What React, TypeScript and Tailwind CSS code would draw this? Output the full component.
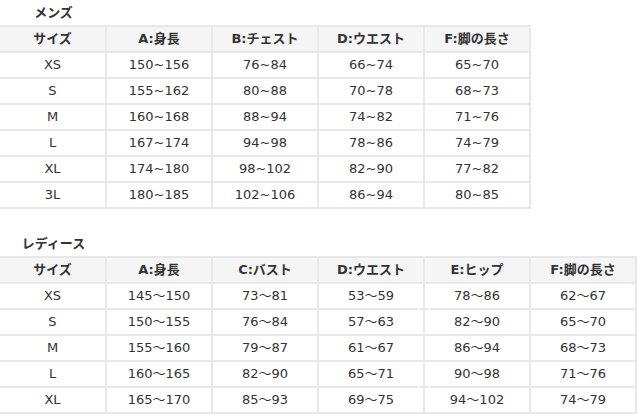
const mens = {
  title: 'メンズ',
  headers: ['サイズ', 'A:身長', 'B:チェスト', 'D:ウエスト', 'F:脚の長さ'],
  rows: [
    ['XS', '150~156', '76~84', '66~74', '65~70'],
    ['S', '155~162', '80~88', '70~78', '68~73'],
    ['M', '160~168', '88~94', '74~82', '71~76'],
    ['L', '167~174', '94~98', '78~86', '74~79'],
    ['XL', '174~180', '98~102', '82~90', '77~82'],
    ['3L', '180~185', '102~106', '86~94', '80~85'],
  ],
};

const ladies = {
  title: 'レディース',
  headers: ['サイズ', 'A:身長', 'C:バスト', 'D:ウエスト', 'E:ヒップ', 'F:脚の長さ'],
  rows: [
    ['XS', '145～150', '73～81', '53～59', '78～86', '62～67'],
    ['S', '150～155', '76～84', '57～63', '82～90', '65～70'],
    ['M', '155～160', '79～87', '61～67', '86～94', '68～73'],
    ['L', '160～165', '82～90', '65～71', '90～98', '71～76'],
    ['XL', '165～170', '85～93', '69～75', '94～102', '74～79'],
  ],
};

function SizeTable({
  title,
  headers,
  rows,
  cols,
}: {
  title: string;
  headers: string[];
  rows: string[][];
  cols: string;
}) {
  return (
    <div>
      {/* caption sits over the first column */}
      <div className="w-[107px] h-[25px] flex items-center justify-center font-bold text-[13px] text-[#333]">
        {title}
      </div>
      <div className={`grid ${cols} border-t-2 border-[#e8e8e8]`}>
        {headers.map((h) => (
          <div
            key={h}
            className="h-[26px] flex items-center justify-center bg-[#f5f5f5] border-r-2 border-b-2 border-[#e8e8e8] font-bold text-[13px] text-[#333]"
          >
            {h}
          </div>
        ))}
        {rows.map((row, i) =>
          row.map((cell, j) => (
            <div
              key={`${i}-${j}`}
              className="h-[26px] flex items-center justify-center border-r-2 border-b-2 border-[#e8e8e8] text-[13px] text-[#333]"
            >
              {cell}
            </div>
          ))
        )}
      </div>
    </div>
  );
}

export default function App() {
  return (
    <div className="w-[637px] h-[416px] bg-white overflow-hidden font-['DejaVu_Sans','Noto_Sans_CJK_JP',sans-serif]">
      <SizeTable {...mens} cols="w-[531px] grid-cols-[107px_repeat(4,106px)]" />
      <div className="pt-[22px]">
        <SizeTable {...ladies} cols="w-[637px] grid-cols-[107px_repeat(5,106px)]" />
      </div>
    </div>
  );
}
